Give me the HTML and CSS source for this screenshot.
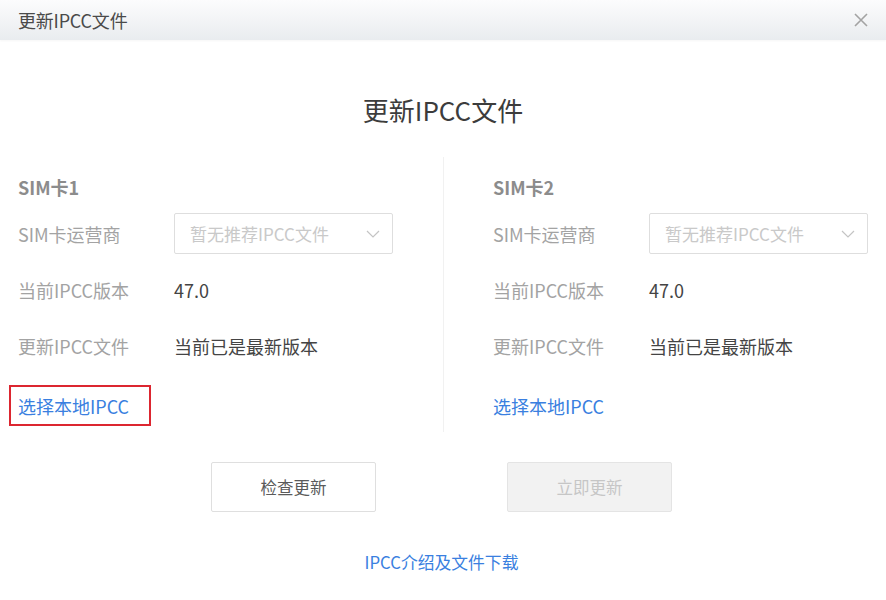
FILE: index.html
```html
<!DOCTYPE html>
<html lang="zh-CN">
<head>
<meta charset="utf-8">
<title>更新IPCC文件</title>
<link rel="stylesheet" href="styles.css">
</head>
<body>
<div class="dialog">
  <div class="titlebar">
    <span class="title">更新IPCC文件</span>
    <span class="close" aria-label="关闭">
      <svg width="16" height="16" viewBox="0 0 16 16"><path d="M2 2 L14 14 M14 2 L2 14" stroke="#a3a3a3" stroke-width="1.6" fill="none"/></svg>
    </span>
  </div>
  <h1 class="heading">更新IPCC文件</h1>
  <div class="columns">
    <div class="col col-left">
      <div class="sim-title">SIM卡1</div>
      <div class="row row-select">
        <span class="label">SIM卡运营商</span>
        <div class="select">
          <span class="placeholder">暂无推荐IPCC文件</span>
          <svg class="chev" width="14" height="8" viewBox="0 0 14 8"><path d="M1 1 L7 7 L13 1" stroke="#c4c4c4" stroke-width="1.2" fill="none"/></svg>
        </div>
      </div>
      <div class="row">
        <span class="label">当前IPCC版本</span>
        <span class="value">47.0</span>
      </div>
      <div class="row">
        <span class="label">更新IPCC文件</span>
        <span class="value">当前已是最新版本</span>
      </div>
      <div class="row row-link">
        <a class="link local highlighted">选择本地IPCC</a>
      </div>
    </div>
    <div class="col col-right">
      <div class="sim-title">SIM卡2</div>
      <div class="row row-select">
        <span class="label">SIM卡运营商</span>
        <div class="select">
          <span class="placeholder">暂无推荐IPCC文件</span>
          <svg class="chev" width="14" height="8" viewBox="0 0 14 8"><path d="M1 1 L7 7 L13 1" stroke="#c4c4c4" stroke-width="1.2" fill="none"/></svg>
        </div>
      </div>
      <div class="row">
        <span class="label">当前IPCC版本</span>
        <span class="value">47.0</span>
      </div>
      <div class="row">
        <span class="label">更新IPCC文件</span>
        <span class="value">当前已是最新版本</span>
      </div>
      <div class="row row-link">
        <a class="link local">选择本地IPCC</a>
      </div>
    </div>
  </div>
  <div class="buttons">
    <button class="btn">检查更新</button>
    <button class="btn btn-disabled">立即更新</button>
  </div>
  <div class="footer">
    <a class="link">IPCC介绍及文件下载</a>
  </div>
</div>
</body>
</html>
```

FILE: styles.css
```css
* { box-sizing: border-box; }
html, body {
  margin: 0;
  padding: 0;
  background: #ffffff;
}
body {
  font-family: "Noto Sans CJK SC", "Noto Sans", sans-serif;
  color: #444;
}
.dialog {
  width: 886px;
  height: 600px;
  background: #fff;
}
.titlebar {
  height: 40px;
  display: flex;
  align-items: center;
  justify-content: space-between;
  padding: 0 17px 0 18px;
  background: linear-gradient(#fcfcfd, #e9ecef);
  box-shadow: 0 1px 2px rgba(0,0,0,0.04);
}
.title {
  font-size: 18px;
  color: #4a4a4a;
  letter-spacing: -0.2px;
}
.close {
  display: flex;
  width: 16px;
  height: 16px;
}
.heading {
  margin: 0;
  padding-top: 54px;
  text-align: center;
  font-size: 26px;
  font-weight: 400;
  line-height: 32px;
  color: #3c3c3c;
}
.columns {
  display: flex;
  margin-top: 31px;
  height: 275px;
}
.col {
  padding-top: 18px;
}
.col-left {
  width: 444px;
  padding-left: 18px;
  border-right: 1px solid #f1f1f1;
}
.col-right {
  flex: 1;
  padding-left: 49px;
}
.sim-title {
  height: 24px;
  line-height: 24px;
  font-size: 18px;
  font-weight: 700;
  color: #8c8c8c;
}
.row {
  display: flex;
  align-items: center;
  height: 41px;
  margin-top: 15px;
  font-size: 18px;
}
.row-select { margin-top: 14px; }
.row-link { margin-top: 19px; }
.label {
  width: 156px;
  flex: none;
  color: #a3a3a3;
}
.value {
  color: #444;
}
.select {
  width: 219px;
  height: 41px;
  border: 1px solid #dedede;
  border-radius: 2px;
  display: flex;
  align-items: center;
  justify-content: space-between;
  padding: 0 12px 0 15px;
}
.placeholder {
  font-size: 17px;
  color: #c9c9c9;
}
.link {
  color: #3a7fe0;
  cursor: pointer;
}
.local {
  font-size: 18px;
}
.highlighted {
  display: flex;
  align-items: center;
  height: 41px;
  margin-left: -9px;
  padding: 0 20px 0 7px;
  border: 2px solid #dc2630;
}
.buttons {
  display: flex;
  justify-content: center;
  gap: 131px;
  margin-top: 30px;
  padding-right: 3px;
}
.btn {
  width: 165px;
  height: 50px;
  font-family: inherit;
  font-size: 16.5px;
  background: #fff;
  border: 1px solid #dfdfdf;
  border-radius: 2px;
  color: #5a5a5a;
}
.btn-disabled {
  background: #f2f2f2;
  border-color: #e4e4e4;
  color: #c6c6c6;
}
.footer {
  margin-top: 38px;
  text-align: center;
  font-size: 16.8px;
  line-height: 24px;
  padding-right: 3px;
}
```
